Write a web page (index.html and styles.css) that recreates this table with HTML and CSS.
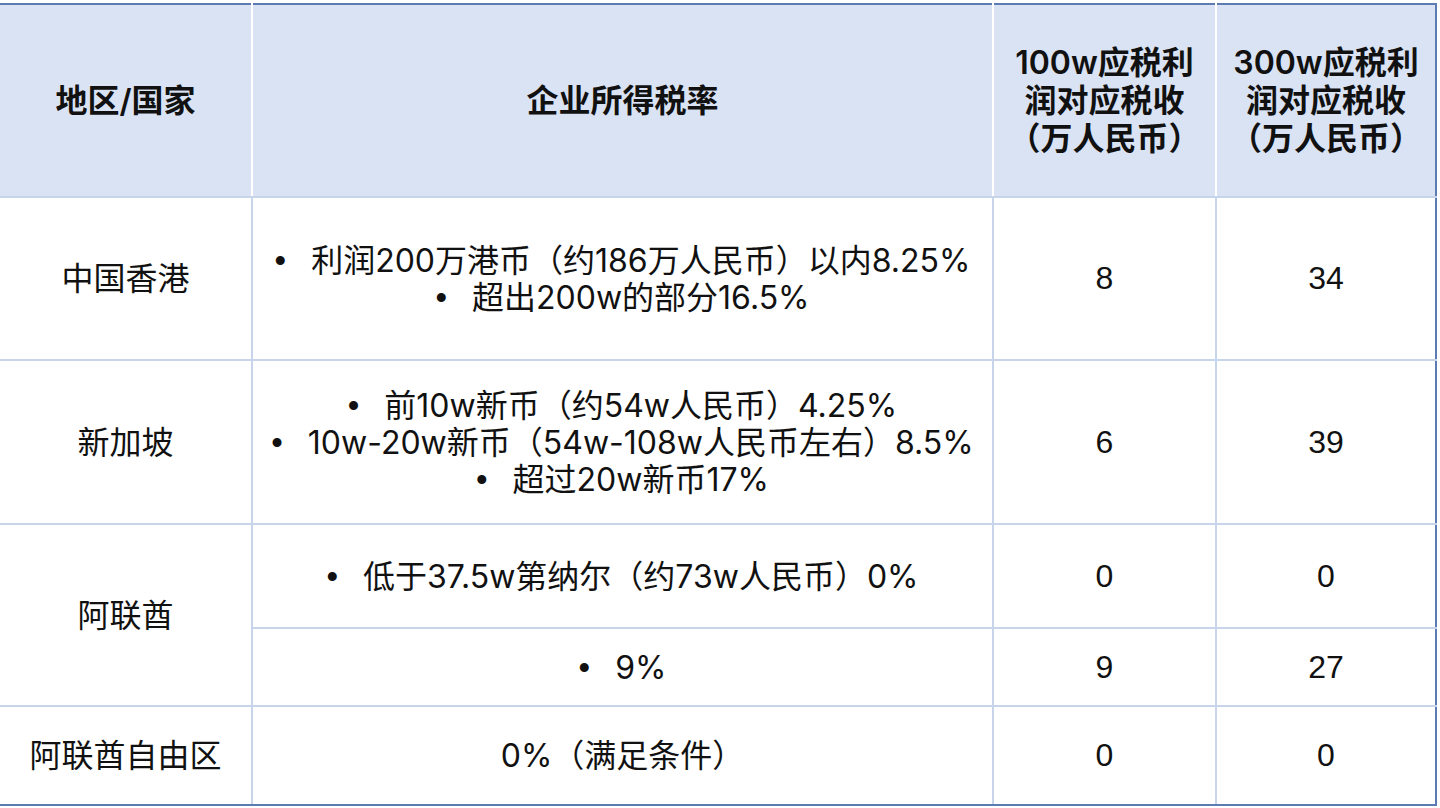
FILE: index.html
```html
<!DOCTYPE html>
<html lang="zh-CN">
<head>
<meta charset="utf-8">
<title>企业所得税率对比</title>
<link rel="stylesheet" href="styles.css">
</head>
<body>
<div class="wrap">
<table class="tax">
  <colgroup>
    <col class="c1"><col class="c2"><col class="c3"><col class="c4">
  </colgroup>
  <thead>
    <tr class="r-head">
      <th>地区/国家</th>
      <th>企业所得税率</th>
      <th>100w应税利<br>润对应税收<br>（万人民币）</th>
      <th>300w应税利<br>润对应税收<br>（万人民币）</th>
    </tr>
  </thead>
  <tbody>
    <tr class="r-hk">
      <td>中国香港</td>
      <td><span class="li"><span class="b">•</span>利润200万港币（约186万人民币）以内8.25%</span><br><span class="li"><span class="b">•</span>超出200w的部分16.5%</span></td>
      <td class="num">8</td>
      <td class="num">34</td>
    </tr>
    <tr class="r-sg">
      <td>新加坡</td>
      <td><span class="li"><span class="b">•</span>前10w新币（约54w人民币）4.25%</span><br><span class="li"><span class="b">•</span>10w-20w新币（54w-108w人民币左右）8.5%</span><br><span class="li"><span class="b">•</span>超过20w新币17%</span></td>
      <td class="num">6</td>
      <td class="num">39</td>
    </tr>
    <tr class="r-ae1">
      <td rowspan="2">阿联酋</td>
      <td><span class="li"><span class="b">•</span>低于37.5w第纳尔（约73w人民币）0%</span></td>
      <td class="num">0</td>
      <td class="num">0</td>
    </tr>
    <tr class="r-ae2">
      <td><span class="li"><span class="b">•</span>9%</span></td>
      <td class="num">9</td>
      <td class="num">27</td>
    </tr>
    <tr class="r-fz">
      <td>阿联酋自由区</td>
      <td>0%（满足条件）</td>
      <td class="num">0</td>
      <td class="num">0</td>
    </tr>
  </tbody>
</table>
</div>
</body>
</html>
```

FILE: styles.css
```css
html, body {
  margin: 0;
  padding: 0;
  background: #ffffff;
}

.wrap {
  padding-top: 3px;
  margin-left: -2px;
}

.tax {
  border-collapse: collapse;
  table-layout: fixed;
  width: 1439px;
  border: 2px solid #5b7bb2;
  font-family: "Inter", "Noto Sans CJK SC", sans-serif;
  font-size: 32px;
  line-height: 37px;
  color: #111111;
}

.c1 { width: 253px; }
.c2 { width: 741px; }
.c3 { width: 223px; }
.c4 { width: 220px; }

.tax th,
.tax td {
  padding: 0 4px;
  text-align: center;
  vertical-align: middle;
  border: 2px solid #c7d4e9;
}

.tax th {
  background: #dae3f4;
  font-weight: 600;
  line-height: 38px;
  border-left-color: #ffffff;
  border-right-color: #ffffff;
  border-top-color: #5b7bb2;
}

.tax th:first-child { border-left-color: #5b7bb2; }
.tax th:last-child { border-right-color: #5b7bb2; }
.tax td:last-child { border-right-color: #5b7bb2; }
.tax tr:last-child td { border-bottom-color: #5b7bb2; }

.r-head { height: 193px; }
.r-hk { height: 163px; }
.r-sg { height: 164px; }
.r-ae1 { height: 104px; }
.r-ae2 { height: 78px; }
.r-fz { height: 99px; }

.num {
  font-family: "Liberation Sans", "Noto Sans CJK SC", sans-serif;
}

.li { white-space: nowrap; }

.b {
  font-family: "Liberation Sans", sans-serif;
  font-size: 33px;
  line-height: 0;
  padding-right: 25px;
}
```
